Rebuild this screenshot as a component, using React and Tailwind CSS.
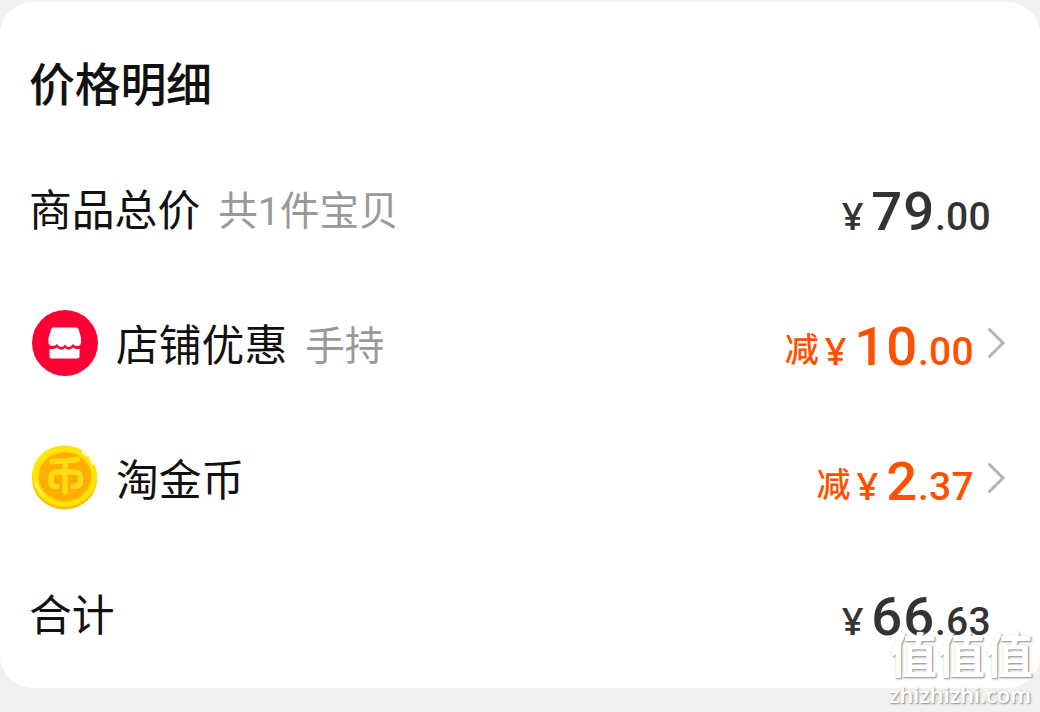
function ShopIcon() {
  return (
    <svg className="size-[66px] shrink-0" viewBox="0 0 66 66" fill="none">
      <circle cx="33" cy="33" r="33" fill="#ff0036" />
      <path d="M21 17.5H44Q46 17.5 46.8 19.5L49 28V33Q48.5 36 45 36Q42 36 40.7 34Q39.5 37 37 37Q34.5 37 33 34.5Q31.5 37 29 37Q26.5 37 25 34Q23.5 36 20.5 36Q17 36 16.5 33V28L19 19.5Q19.7 17.5 21 17.5Z" fill="#fff" />
      <path d="M17.5 38.7Q22 39.7 25 37.5Q29 41.5 33 38Q37 41.5 41 37.5Q44 39.7 47.5 38.7V46Q47.5 48.5 45 48.5H20Q17.5 48.5 17.5 46Z" fill="#fff" />
    </svg>
  );
}

function CoinIcon() {
  return (
    <svg className="size-[66px] shrink-0" viewBox="0 0 66 66" fill="none">
      <ellipse cx="32.5" cy="34" rx="32.5" ry="30.5" fill="#ffbd00" />
      <ellipse cx="32.5" cy="31" rx="32.5" ry="30.5" fill="#ffe600" />
      <ellipse cx="33" cy="32" rx="27" ry="25.5" fill="#ffcc00" />
      <ellipse cx="33" cy="31.5" rx="26" ry="24" fill="#ffac05" />
      <g stroke="#ffdb0f" strokeWidth="5.5" strokeLinecap="round" strokeLinejoin="round">
        <path d="M20 16.5Q33 17 45.5 14.5" />
        <path d="M25 41.5H23Q19 41.5 19 37V33Q19 27 25 27H42Q48.5 27 48.5 33V36Q48.5 41.5 42.5 41.5H41" />
        <path d="M33 17V47" />
      </g>
      <path d="M51 7.5L55 10" stroke="#fffbd0" strokeWidth="3" strokeLinecap="round" />
      <path d="M57.5 12.5Q60 15 61 19" stroke="#fffbd0" strokeWidth="2.5" strokeLinecap="round" />
      <path d="M4 38Q6 45 12 50" stroke="#fff36a" strokeWidth="2" strokeLinecap="round" />
    </svg>
  );
}

function Chevron() {
  return (
    <svg className="ml-[12px] mr-[4px] h-8 w-5 shrink-0" viewBox="0 0 20 32" fill="none">
      <path d="M3.5 2.5L17 16L3.5 29.5" stroke="#b4b4b4" strokeWidth="3" strokeLinecap="round" />
    </svg>
  );
}

function Price({ whole, cents, off }) {
  return (
    <div className={`flex items-baseline pt-[8px] font-['Roboto','Noto_Sans_CJK_SC',sans-serif] font-medium leading-none ${off ? "text-[#ff5000]" : "text-[#333]"}`}>
      {off && <span className="mr-[6px] -translate-y-[3px] text-[34px]">减</span>}
      <span className="mr-[8px] font-['Open_Sans',sans-serif] text-[38px] font-semibold">¥</span>
      <span className="text-[54.5px] tracking-[0.8px]">{whole}</span>
      <span className="text-[39px] tracking-[0.3px]">{cents}</span>
    </div>
  );
}

const rows = [
  { label: "商品总价", note: "共1件宝贝", whole: "79", cents: ".00" },
  { label: "店铺优惠", note: "手持", whole: "10", cents: ".00", off: true, icon: <ShopIcon /> },
  { label: "淘金币", whole: "2", cents: ".37", off: true, icon: <CoinIcon /> },
  { label: "合计", whole: "66", cents: ".63" },
];

export default function App() {
  return (
    <div className="relative h-[712px] w-[1040px] overflow-hidden bg-[#f1f1f1] pt-[2px] font-['Roboto','Noto_Sans_CJK_SC',sans-serif]">
      <div className="h-[686px] rounded-[32px] bg-white pl-[29px] pr-[30px] pt-[48px] text-[#111]">
        <h1 className="h-[70px] text-[46px] font-medium leading-[70px] tracking-[-0.3px]">价格明细</h1>
        <div className="mt-[20px]">
          {rows.map((row) => (
            <div key={row.label} className="flex h-[135px] items-center">
              {row.icon && <div className="ml-[3px] mr-[18px]">{row.icon}</div>}
              <span className="pt-[8px] text-[42.8px]">{row.label}</span>
              {row.note && <span className="ml-[18px] pt-[8px] text-[39.5px] text-[#999]">{row.note}</span>}
              <div className={row.off ? "ml-auto" : "ml-auto mr-[19px]"}>
                <Price whole={row.whole} cents={row.cents} off={row.off} />
              </div>
              {row.off && <Chevron />}
            </div>
          ))}
        </div>
      </div>

      {/* Watermark */}
      <div className="absolute left-[889px] top-[630px] text-white [text-shadow:1px_1px_1px_#a0a0a0,1px_1px_3px_#b8b8b8]">
        <div className="text-[48px] font-bold leading-[54px]">值值值</div>
        <div className="font-['Open_Sans',sans-serif] text-[21.8px] font-semibold leading-[21px]">zhizhizhi.com</div>
      </div>
    </div>
  );
}
